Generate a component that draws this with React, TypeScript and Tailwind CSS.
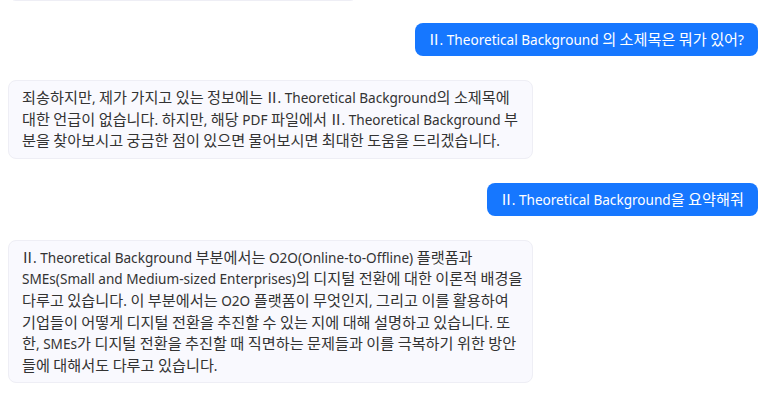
const font = { fontFamily: '"Noto Sans", "Noto Sans CJK KR", sans-serif' };
const cjk = { fontFamily: '"Noto Sans CJK KR", sans-serif' };

type Msg = { id: number; role: "user" | "bot"; lines: string[] };

const messages: Msg[] = [
  {
    id: 1,
    role: "user",
    lines: ["Ⅱ. Theoretical Background 의 소제목은 뭐가 있어?"],
  },
  {
    id: 2,
    role: "bot",
    lines: [
      "죄송하지만, 제가 가지고 있는 정보에는 Ⅱ. Theoretical Background의 소제목에",
      "대한 언급이 없습니다. 하지만, 해당 PDF 파일에서 Ⅱ. Theoretical Background 부",
      "분을 찾아보시고 궁금한 점이 있으면 물어보시면 최대한 도움을 드리겠습니다.",
    ],
  },
  {
    id: 3,
    role: "user",
    lines: ["Ⅱ. Theoretical Background을 요약해줘"],
  },
  {
    id: 4,
    role: "bot",
    lines: [
      "Ⅱ. Theoretical Background 부분에서는 O2O(Online-to-Offline) 플랫폼과",
      "SMEs(Small and Medium-sized Enterprises)의 디지털 전환에 대한 이론적 배경을",
      "다루고 있습니다. 이 부분에서는 O2O 플랫폼이 무엇인지, 그리고 이를 활용하여",
      "기업들이 어떻게 디지털 전환을 추진할 수 있는 지에 대해 설명하고 있습니다. 또",
      "한, SMEs가 디지털 전환을 추진할 때 직면하는 문제들과 이를 극복하기 위한 방안",
      "들에 대해서도 다루고 있습니다.",
    ],
  },
];

// hangul is set larger than latin, like the reference's Korean font
const runs = /(Ⅱ|[\uAC00-\uD7A3]+(?:\s+[\uAC00-\uD7A3]+)*)/;

function Line({ text }: { text: string }) {
  return (
    <>
      {text.split(runs).map((p, i) => {
        if (!p) return null;
        if (p === "Ⅱ")
          return (
            <span key={i} style={cjk} className="-ml-[2px] text-[15px] leading-none tracking-[-2px]">
              Ⅱ
            </span>
          );
        if (/[\uAC00-\uD7A3]/.test(p))
          return (
            <span key={i} style={cjk} className="text-[15.2px] leading-none">
              {p}
            </span>
          );
        return (
          <span key={i} className="text-[13.6px] leading-none">
            {p}
          </span>
        );
      })}
    </>
  );
}

export default function App() {
  return (
    <div className="h-[400px] overflow-hidden bg-white px-2" style={font}>
      {/* previous bubble, scrolled out of view */}
      <div className="mt-[-59px] h-[60px] w-[350px] rounded-lg border border-[#eeeef5] bg-[#f9f9fe]" />

      <div className="mt-[22px] flex flex-col gap-6">
        {messages.map((m) =>
          m.role === "user" ? (
            <div key={m.id} className="flex justify-end pr-[3px]">
              <div className="h-[33px] whitespace-nowrap rounded-lg bg-[#1677ff] px-[14px] py-[6px] text-[14px] leading-[21px] text-white">
                <Line text={m.lines[0]} />
              </div>
            </div>
          ) : (
            <div key={m.id} className="flex">
              <div className="w-[525px] rounded-lg border border-[#eeeef5] bg-[#f9f9fe] px-[13px] py-[6px] text-[14px] leading-[21.6px] text-[#333]">
                {m.lines.map((l, i) => (
                  <div key={i} className="h-[21.6px] whitespace-nowrap">
                    <Line text={l} />
                  </div>
                ))}
              </div>
            </div>
          )
        )}
      </div>
    </div>
  );
}
